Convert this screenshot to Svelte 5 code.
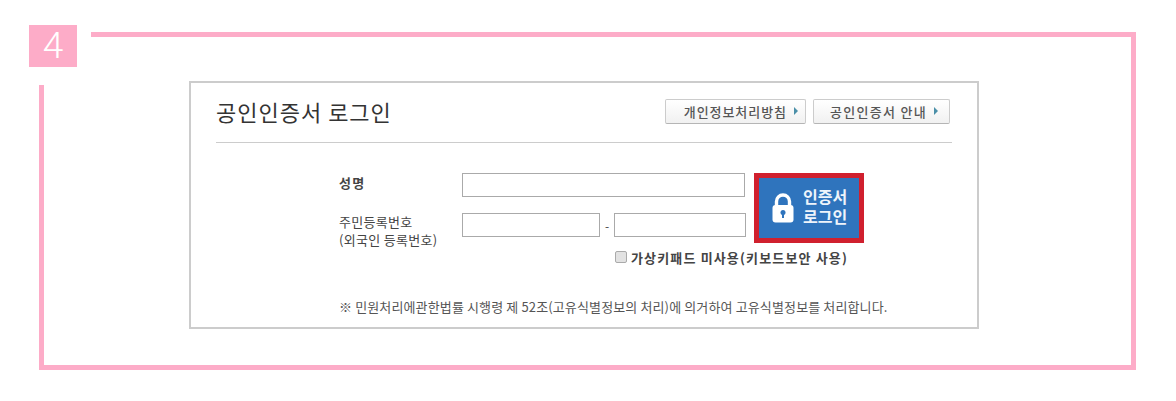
<script lang="ts">
	const notice = '※ 민원처리에관한법률 시행령 제 52조(고유식별정보의 처리)에 의거하여 고유식별정보를 처리합니다.';
</script>

<div class="page">
	<section class="frame">
		<div class="step"><span class="num">4</span></div>
		<div class="card">
			<header class="head">
				<h1>공인인증서 로그인</h1>
				<div class="links">
					<button type="button" class="link privacy">개인정보처리방침<i class="arrow"></i></button>
					<button type="button" class="link guide">공인인증서 안내<i class="arrow"></i></button>
				</div>
			</header>
			<div class="form">
				<div class="labels">
					<div class="name-label">성명</div>
					<div class="id-label">주민등록번호<br />(외국인 등록번호)</div>
				</div>
				<div class="fields">
					<input type="text" class="name" />
					<div class="id-row">
						<input type="text" class="id1" />
						<span class="dash">-</span>
						<input type="text" class="id2" />
					</div>
				</div>
				<button type="button" class="login">
					<svg width="22" height="30" viewBox="0 0 22 30" aria-hidden="true">
						<path d="M4.5 13V8.5a6.5 6.5 0 0 1 13 0V13" fill="none" stroke="#fff" stroke-width="3.4" />
						<rect x="0.5" y="12" width="21" height="17.5" rx="3" fill="#fff" />
						<circle cx="11" cy="19.5" r="2.5" fill="#2f74bd" />
						<rect x="10" y="20" width="2" height="5" fill="#2f74bd" />
					</svg>
					<span class="login-text">인증서<br />로그인</span>
				</button>
			</div>
			<label class="keyboard"><span class="check"></span>가상키패드 미사용(키보드보안 사용)</label>
			<p class="notice">{notice}</p>
		</div>
	</section>
</div>

<style>
	:global(body) {
		margin: 0;
		background: #fff;
	}
	.page {
		width: 1176px;
		height: 401px;
		padding: 32px 40px 0 39px;
		box-sizing: border-box;
		font-family: "Noto Sans CJK KR", "Noto Sans", sans-serif;
		color: #444;
	}
	.frame {
		position: relative;
		box-sizing: border-box;
		height: 338px;
		border: 5px solid #fdacc8;
		padding: 44px 152px 0 145px;
	}
	/* white patch hides the corner of the frame behind the number */
	.step {
		position: absolute;
		left: -15px;
		top: -12px;
		width: 62px;
		height: 60px;
		background: #fff;
	}
	.num {
		display: block;
		width: 48px;
		height: 42px;
		background: #fdacc8;
		color: #fff;
		font: 300 37px/42px Roboto, "Liberation Sans", sans-serif;
		text-align: center;
	}
	.card {
		box-sizing: border-box;
		height: 248px;
		border: 2px solid #ccc;
		padding: 0 25px 0 25px;
	}
	.head {
		display: flex;
		align-items: center;
		justify-content: space-between;
		height: 59px;
		border-bottom: 1px solid #ccc;
	}
	h1 {
		margin: 0 0 4px;
		font-size: 22px;
		font-weight: 400;
		letter-spacing: 1px;
		color: #333;
	}
	.links {
		display: flex;
		gap: 7px;
		margin: 0 2px 3px 0;
	}
	.link {
		display: flex;
		align-items: center;
		justify-content: flex-end;
		box-sizing: border-box;
		height: 25px;
		border: 1px solid #ccc;
		border-bottom-color: #b5b5b5;
		border-radius: 2px;
		background: linear-gradient(#fff, #f1f1f1);
		font: 500 13px "Noto Sans CJK KR", sans-serif;
		letter-spacing: 0.95px;
		color: #555;
	}
	.privacy { width: 141px; padding: 0 7px 0 0; }
	.guide { width: 137px; padding: 0 11px 0 0; letter-spacing: 1.3px; }
	.arrow {
		width: 0;
		height: 0;
		margin-left: 7px;
		border-left: 4px solid #4a8fa8;
		border-top: 4px solid transparent;
		border-bottom: 4px solid transparent;
	}
	.form {
		display: flex;
		padding: 30px 0 0 123px;
	}
	.labels {
		width: 123px;
		font-size: 13px;
		letter-spacing: 0.3px;
	}
	.name-label {
		height: 33px;
		padding-top: 1px;
		font-weight: 700;
		line-height: 18px;
		letter-spacing: 1.2px;
	}
	.id-label {
		line-height: 18px;
		padding-top: 6px;
	}
	.fields {
		display: flex;
		flex-direction: column;
		gap: 16px;
		width: 284px;
	}
	input {
		box-sizing: border-box;
		height: 24px;
		margin: 0;
		padding: 0;
		border: 1px solid #aaa;
		background: #fff;
		outline: none;
	}
	.name { width: 283px; }
	.id-row {
		display: flex;
		align-items: center;
		width: 284px;
	}
	.id1 { width: 138px; }
	.id2 { width: 132px; }
	.dash {
		width: 14px;
		text-align: center;
		font-size: 12px;
	}
	.login {
		display: flex;
		align-items: center;
		gap: 9px;
		box-sizing: border-box;
		width: 110px;
		height: 70px;
		margin: 0 0 0 8px;
		padding: 0 0 0 13px;
		border: 5px solid #d0202e;
		background: #2f74bd;
		color: #eef4fb;
		font: 700 16px/20px "Noto Sans CJK KR", sans-serif;
		text-align: center;
	}
	.login-text { padding-bottom: 5px; }
	.keyboard {
		display: flex;
		align-items: center;
		gap: 4px;
		margin: -2px 0 0 399px;
		height: 20px;
		font-size: 13px;
		font-weight: 700;
		letter-spacing: 1.15px;
		color: #444;
	}
	.check {
		box-sizing: border-box;
		width: 12px;
		height: 12px;
		border: 1px solid #aaa;
		border-radius: 2px;
		background: #e2e2e2;
	}
	.notice {
		margin: 31px 0 0 123px;
		font-size: 13px;
		line-height: 18px;
		letter-spacing: 0.13px;
		white-space: nowrap;
		color: #555;
	}
</style>
